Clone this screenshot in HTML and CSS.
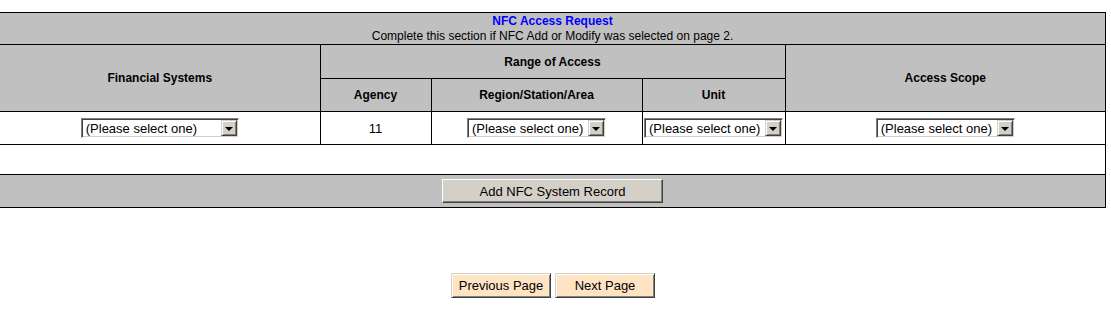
FILE: index.html
```html
<!DOCTYPE html>
<html lang="en">
<head>
    <meta charset="UTF-8">
    <title>NFC Access Request</title>
    <link rel="stylesheet" href="styles.css">
</head>
<body>
    <div class="page">
        <!-- NFC section -->
        <table class="nfc">
            <colgroup>
                <col class="w-fin">
                <col class="w-agency">
                <col class="w-region">
                <col class="w-unit">
                <col>
            </colgroup>
            <tr class="title-row">
                <td colspan="5" class="edge">
                    <div class="title">NFC Access Request</div>
                    <div>Complete this section if NFC Add or Modify was selected on page 2.</div>
                </td>
            </tr>
            <tr class="head-top">
                <th rowspan="2" class="edge">Financial Systems</th>
                <th colspan="3">Range of Access</th>
                <th rowspan="2">Access Scope</th>
            </tr>
            <tr class="head-sub">
                <th>Agency</th>
                <th>Region/Station/Area</th>
                <th>Unit</th>
            </tr>
            <tr class="data-row">
                <td class="edge">
                    <span class="combo combo-wide">
                        <select name="financialSystem"><option>(Please select one)</option></select>
                        <span class="drop"><i></i></span>
                    </span>
                </td>
                <td>11</td>
                <td>
                    <span class="combo">
                        <select name="region"><option>(Please select one)</option></select>
                        <span class="drop"><i></i></span>
                    </span>
                </td>
                <td>
                    <span class="combo">
                        <select name="unit"><option>(Please select one)</option></select>
                        <span class="drop"><i></i></span>
                    </span>
                </td>
                <td>
                    <span class="combo">
                        <select name="scope"><option>(Please select one)</option></select>
                        <span class="drop"><i></i></span>
                    </span>
                </td>
            </tr>
            <tr class="blank-row">
                <td colspan="5" class="edge"></td>
            </tr>
            <tr class="action-row">
                <td colspan="5" class="edge">
                    <button type="button" class="btn-add">Add NFC System Record</button>
                </td>
            </tr>
        </table>

        <!-- Navegação -->
        <div class="nav">
            <button type="button" class="btn-nav">Previous Page</button>
            <button type="button" class="btn-nav">Next Page</button>
        </div>
    </div>
</body>
</html>
```

FILE: styles.css
```css
/* General */
body {
    margin: 0;
    background-color: #ffffff;
    font-family: "Liberation Sans", Arial, sans-serif;
    font-size: 12px;
    color: #000000;
}
.page {
    padding: 12px 5px 0 0;
}

/* Table */
.nfc {
    width: 100%;
    border-collapse: collapse;
    table-layout: fixed;
}
.w-fin { width: 320px; }
.w-agency { width: 111px; }
.w-region { width: 211px; }
.w-unit { width: 143px; }

.nfc td,
.nfc th {
    border: 1px solid #000000;
    padding: 0;
    text-align: center;
    vertical-align: middle;
}
.nfc .edge {
    border-left: none;
}
.nfc th {
    background-color: #c0c0c0;
    font-weight: bold;
    font-size: 12px;
}

.title-row td {
    background-color: #c0c0c0;
    height: 30px;
    padding-top: 1px;
    line-height: 15px;
}
.title {
    color: #0000ff;
    font-weight: bold;
}
.head-top { height: 34px; }
.head-sub { height: 33px; }
.data-row { height: 33px; }
.data-row td { font-size: 13px; }
.blank-row td { height: 29px; }
.action-row td {
    background-color: #c0c0c0;
    height: 32px;
}

/* Combo box */
.combo {
    display: inline-flex;
    vertical-align: middle;
    box-sizing: border-box;
    width: 139px;
    height: 20px;
    border: 1px solid;
    border-color: #808080 #ffffff #ffffff #808080;
    box-shadow: inset 1px 1px #404040, inset -1px -1px #d4d0c8;
    background-color: #ffffff;
    padding: 1px;
}
.combo-wide {
    width: 158px;
}
.combo select {
    appearance: none;
    -webkit-appearance: none;
    flex: 1;
    min-width: 0;
    height: 16px;
    border: none;
    outline: none;
    margin: 0;
    padding: 0 0 0 3px;
    background: transparent;
    font-family: "Liberation Sans", Arial, sans-serif;
    font-size: 13px;
    color: #000000;
}
.drop {
    display: flex;
    align-items: center;
    justify-content: center;
    box-sizing: border-box;
    width: 16px;
    height: 16px;
    background-color: #d4d0c8;
    border: 1px solid;
    border-color: #d4d0c8 #404040 #404040 #d4d0c8;
    box-shadow: inset 1px 1px #ffffff, inset -1px -1px #808080;
}
.drop i {
    width: 0;
    height: 0;
    border-top: 4px solid #000000;
    border-left: 4px solid transparent;
    border-right: 4px solid transparent;
    margin-top: 1px;
}

/* Buttons */
.btn-add,
.btn-nav {
    box-sizing: border-box;
    font-family: "Liberation Sans", Arial, sans-serif;
    font-size: 13px;
    color: #000000;
    padding: 0;
    border: 1px solid;
    cursor: pointer;
}
.btn-add {
    width: 221px;
    height: 24px;
    background-color: #d4d0c8;
    border-color: #ffffff #404040 #404040 #ffffff;
    box-shadow: inset -1px -1px #808080;
    vertical-align: middle;
}
.nav {
    display: flex;
    justify-content: center;
    gap: 4px;
    padding-top: 65px;
}
.btn-nav {
    width: 100px;
    height: 25px;
    background-color: #ffe4c4;
    border-color: #d4d0c8 #404040 #404040 #d4d0c8;
    box-shadow: inset 1px 1px #ffffff, inset -1px -1px #808080;
}
```
